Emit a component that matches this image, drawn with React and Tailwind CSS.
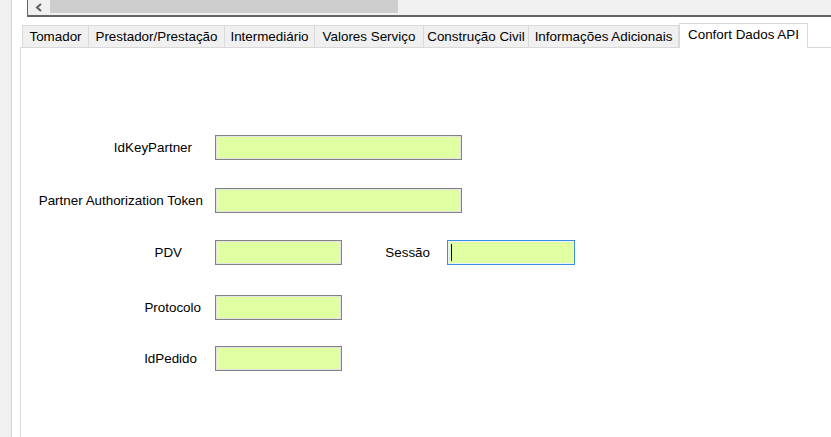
import React from "react";

const tabs = [
  { label: "Tomador", w: "w-[67px]" },
  { label: "Prestador/Prestação", w: "w-[137px]" },
  { label: "Intermediário", w: "w-[91px]" },
  { label: "Valores Serviço", w: "w-[110px]" },
  { label: "Construção Civil", w: "w-[106px]" },
  { label: "Informações Adicionais", w: "w-[151px]" },
];

function Field({ width = "w-[247px]", focused = false }) {
  return (
    <div
      className={`${width} h-[25px] bg-[#e0ffa2] border ${
        focused
          ? "border-[#3c8ce0] shadow-[inset_0_0_0_1px_#eaf3fc]"
          : "border-[#828282] shadow-[inset_0_0_0_1px_#e4e4e4]"
      } flex items-center`}
    >
      {focused && <div className="ml-[3px] w-px h-[17px] bg-black" />}
    </div>
  );
}

function Row({ label, pr, mt, children }) {
  return (
    <div className={`flex items-center ${mt}`}>
      <div className={`w-[194px] text-right ${pr} whitespace-nowrap`}>{label}</div>
      {children}
    </div>
  );
}

export default function App() {
  return (
    <div className="w-[831px] h-[437px] flex bg-white text-black text-[13.4px] leading-none font-['Liberation_Sans',Arial,sans-serif] overflow-hidden">
      {/* left edge of the window */}
      <div className="w-[12px] h-full bg-[#f0f0f0] border-r border-[#dadada]" />

      <div className="flex-1 flex flex-col min-w-0">
        {/* horizontal scrollbar */}
        <div className="ml-[15px] h-[17px] flex border-l border-b-2 border-[#646464] bg-[#f0f0f0]">
          <div className="w-[22px] h-[14px] flex items-center justify-center">
            <svg width="8" height="9" viewBox="0 0 8 9">
              <polyline points="6,1 2,4.5 6,8" fill="none" stroke="#606060" strokeWidth="2" />
            </svg>
          </div>
          <div className="w-[348px] h-[13px] bg-[#cdcdcd]" />
        </div>

        {/* tab control */}
        <div className="ml-[8px] mt-[6px] flex-1 flex flex-col">
          <div className="flex items-end h-[24px] pl-[2px] relative z-10">
            {tabs.map((t, i) => (
              <div
                key={t.label}
                className={`${t.w} h-[22px] ${i > 0 ? "-ml-px" : ""} bg-[#f0f0f0] border border-b-0 border-[#d9d9d9] flex items-center justify-center whitespace-nowrap`}
              >
                {t.label}
              </div>
            ))}
            <div className="w-[129px] h-[25px] -mb-px bg-white border border-b-0 border-[#d9d9d9] flex items-center justify-center whitespace-nowrap pb-[3px]">
              Confort Dados API
            </div>
          </div>

          <div className="flex-1 border-l border-t border-[#d9d9d9] bg-white pt-[87px]">
            <Row label="IdKeyPartner" pr="pr-[23px]" mt="">
              <Field />
            </Row>
            <Row label="Partner Authorization Token" pr="pr-[12px]" mt="mt-[28px]">
              <Field />
            </Row>
            <Row label="PDV" pr="pr-[33px]" mt="mt-[27px]">
              <Field width="w-[127px]" />
              <div className="w-[88px] text-right">Sessão</div>
              <div className="ml-[17px]">
                <Field width="w-[128px]" focused />
              </div>
            </Row>
            <Row label="Protocolo" pr="pr-[14px]" mt="mt-[30px]">
              <Field width="w-[127px]" />
            </Row>
            <Row label="IdPedido" pr="pr-[18px]" mt="mt-[26px]">
              <Field width="w-[127px]" />
            </Row>
          </div>
        </div>
      </div>
    </div>
  );
}
